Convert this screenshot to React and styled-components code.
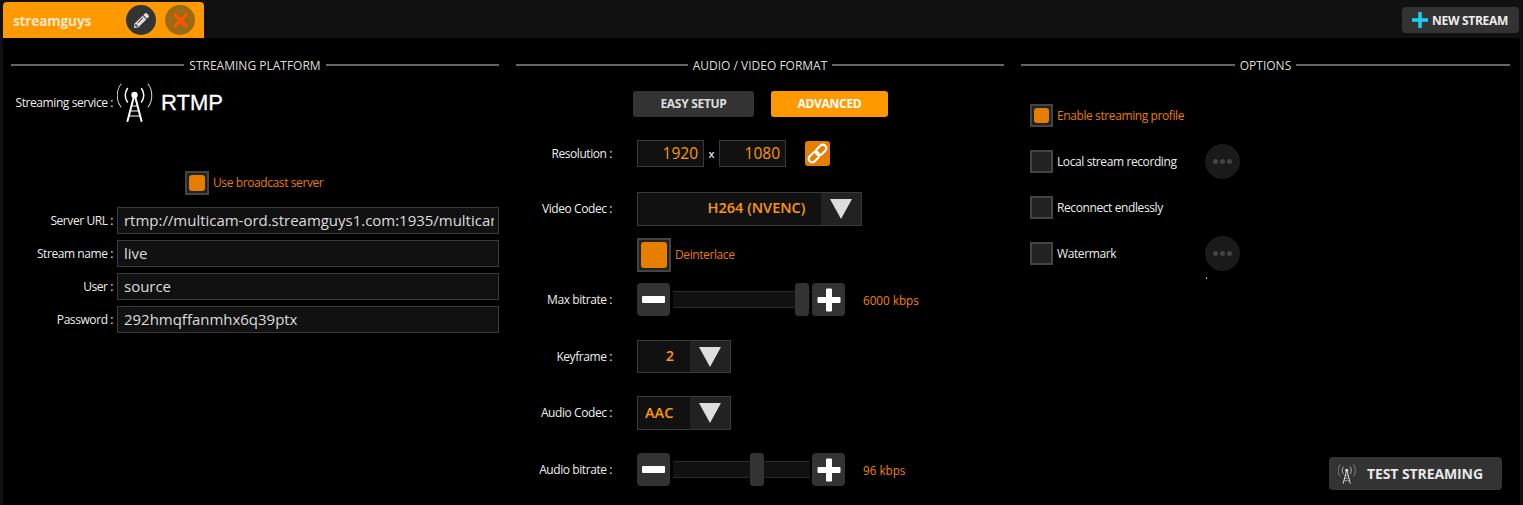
import React from "react";
import styled, { createGlobalStyle } from "styled-components";
import { FaPencilAlt } from "react-icons/fa";

const Global = createGlobalStyle`
  html, body { margin: 0; padding: 0; height: 100%; background: #111; overflow: hidden; }
  * { box-sizing: border-box; }
  body { font-family: "Open Sans", "Noto Sans", sans-serif; }
`;

const ORANGE = "#ff9900";
const DARK_ORANGE = "#e67e00";

const Page = styled.div`
  width: 1523px; height: 505px; background: #111; padding: 0 3px;
  display: flex; flex-direction: column;
`;
const TopBar = styled.header`
  height: 38px; flex: none; display: flex; justify-content: space-between; align-items: flex-start; padding-top: 2px;
`;
const Tab = styled.div`
  width: 201px; height: 36px; background: ${ORANGE}; border-radius: 4px 4px 0 0;
  display: flex; align-items: center; padding: 0 9px 0 10px; gap: 9px;
`;
const TabName = styled.span`
  flex: 1; font-family: "Open Sans", sans-serif; font-weight: 700; font-size: 13.7px; letter-spacing: -0.2px; color: #f7e7c8;
`;
const RoundBtn = styled.button`
  width: 30px; height: 30px; border: 0; border-radius: 50%; padding: 0; flex: none;
  background: ${p => p.$bg}; color: ${p => p.$fg}; display: flex; align-items: center; justify-content: center;
`;
const NewStream = styled.button`
  margin: 5px 1px 0 0; width: 117px; height: 26px; border: 0; border-radius: 4px; background: #333;
  display: flex; align-items: center; gap: 4px; padding: 0 0 0 10px;
  color: #eee; font-family: "Open Sans", sans-serif; font-weight: 700; font-size: 12px; letter-spacing: -0.3px; white-space: nowrap;
`;
const Main = styled.main`
  flex: 1; background: #000; display: grid; grid-template-columns: 488px 488px 489px; gap: 17px; padding: 18px 10px 15px 8px;
`;
const Col = styled.section`
  display: flex; flex-direction: column; min-width: 0;
`;
const Heading = styled.h2`
  margin: 0; height: 18px; display: flex; align-items: center; gap: 5px; flex: none;
  font-weight: 400; font-size: 12px; letter-spacing: 0; color: #ddd; white-space: nowrap;
  &::before, &::after { content: ""; flex: 1; height: 2px; background: #666; }
`;
const Row = styled.div`
  display: flex; align-items: center; flex: none; margin-top: ${p => p.$mt || 0}px; height: ${p => p.$h}px;
  padding-left: ${p => p.$pl || 0}px;
`;
const Label = styled.label`
  flex: none; width: ${p => p.$w}px; margin-right: ${p => p.$gap}px; padding-bottom: 1px; text-align: right;
  font-size: 12px; letter-spacing: -0.42px; color: #eee; white-space: nowrap;
`;
const ServiceName = styled.span`
  font-family: "Liberation Sans", sans-serif; font-size: 22px; color: #fff; margin-left: 8px;
  -webkit-text-stroke: 0.3px #fff;
`;
const Tower = styled.svg`
  flex: none; display: block;
`;
const Check = styled.span`
  flex: none; width: ${p => p.$size}px; height: ${p => p.$size}px; background: #222; border: 2px solid #444;
  padding: 2px; display: block;
  &::after { content: ""; display: ${p => p.$on ? "block" : "none"}; width: 100%; height: 100%; background: ${DARK_ORANGE}; border-radius: 3px; }
`;
const CheckText = styled.span`
  margin-left: 4px; padding-bottom: 1px; font-size: 12px; letter-spacing: -0.4px; white-space: nowrap;
  color: ${p => p.$on ? DARK_ORANGE : "#eee"};
`;
const TextInput = styled.input`
  width: 382px; height: 27px; background: #111; border: 1px solid #3a3a3a; border-radius: 0; outline: 0;
  color: #ddd; font-family: "Open Sans", sans-serif; font-size: 15px; padding: 0 4px 2px 6px; letter-spacing: -0.02px;
`;
const Toggle = styled.button`
  width: ${p => p.$w}px; height: 26px; border: 0; border-radius: 3px; padding: 0 0 1px;
  margin-left: ${p => p.$ml}px; background: ${p => p.$on ? ORANGE : "#333"}; color: ${p => p.$on ? "#fff" : "#ddd"};
  font-family: "Open Sans", sans-serif; font-weight: 700; font-size: 12px; letter-spacing: -0.3px;
`;
const NumBox = styled.div`
  width: 67px; height: 27px; background: #111; border: 1px solid #3a3a3a; color: ${ORANGE};
  font-size: 15.5px; text-align: right; padding-right: 5px; line-height: 25px;
`;
const Times = styled.span`
  width: 15px; text-align: center; color: #ddd; font-size: 11px; font-weight: 600;
`;
const LinkBtn = styled.button`
  margin-left: 19px; width: 25px; height: 25px; padding: 0; border: 0; border-radius: 3px; background: ${DARK_ORANGE};
  display: flex; align-items: center; justify-content: center;
`;
const Select = styled.div`
  width: ${p => p.$w}px; height: ${p => p.$h}px; display: flex; background: #111; border: 1px solid #3a3a3a;
`;
const SelectValue = styled.div`
  flex: 1; color: ${ORANGE}; font-weight: 600; font-size: 14.5px; line-height: ${p => p.$h - 4}px;
  text-align: ${p => p.$align}; padding: ${p => p.$pad};
`;
const SelectArrow = styled.div`
  flex: none; width: 40px; background: #222; display: flex; align-items: center; justify-content: center;
`;
const Step = styled.button`
  flex: none; width: 33px; height: 33px; padding: 0; border: 0; border-radius: 4px; background: #333;
  display: flex; align-items: center; justify-content: center;
`;
const Track = styled.div`
  position: relative; flex: none; width: 137px; height: 17px; margin: 0 2px 0 3px; background: #111;
  border-top: 1px solid #2a2a2a; border-bottom: 1px solid #2a2a2a;
`;
const Handle = styled.span`
  position: absolute; top: -9px; width: 14px; height: 33px; background: #333; border-radius: 3px;
`;
const Value = styled.span`
  margin-left: 18px; color: #f08400; font-size: 11.7px; white-space: nowrap;
`;
const OptionText = styled(CheckText)`
  width: 148px;
`;
const Dots = styled.button`
  width: 35px; height: 35px; margin: -6px 0; border: 0; border-radius: 50%; background: #1a1a1a; padding: 0;
  display: flex; align-items: center; justify-content: center; gap: 2px;
  i { display: block; width: 5px; height: 5px; border-radius: 50%; background: #444; }
`;
const Speck = styled.span`
  display: block; width: 1px; height: 2px; background: #bbb; margin: 12px 0 0 185px; flex: none;
`;
const TestBtn = styled.button`
  margin-top: auto; align-self: flex-end; margin-right: 8px; width: 173px; height: 33px; border: 0; border-radius: 4px; background: #333;
  display: flex; align-items: center; padding: 0 0 0 9px; gap: 11px;
  color: #e8e8e8; font-family: "Open Sans", sans-serif; font-weight: 700; font-size: 14px; letter-spacing: -0.1px; white-space: nowrap;
`;

const TowerIcon = ({ w, h, color = "#fff" }) => (
  <Tower width={w} height={h} viewBox="0 0 36 39" fill="none" stroke={color} strokeLinecap="round">
    <circle cx="17.500" cy="12" r="3.200" fill={color} stroke="none" />
    <path d="M10.500 5.500c-3 4-3 9.500 0 13.500M24.500 5.500c3 4 3 9.500 0 13.500" strokeWidth="1.500" />
    <path d="M4 1C-1 7-1 18 4 24M31 1c5 6 5 17 0 23" strokeWidth="1.100" opacity=".8" />
    <path d="M16.500 15 10.500 38M18.500 15 24.500 38" strokeWidth="2" />
    <path d="M14.500 23h6M13.500 28h8M12.500 33h10" strokeWidth="1.200" />
  </Tower>
);

const Arrow = () => (
  <svg width="22" height="20" viewBox="0 0 22 20"><path d="M0 0h22L11 20z" fill="#ddd" /></svg>
);
const Minus = () => (
  <svg width="24" height="8" viewBox="0 0 24 8"><rect width="23" height="7" rx="1" fill="#fff" /></svg>
);
const Plus = () => (
  <svg width="24" height="24" viewBox="0 0 24 24"><path d="M9 1.500a1 1 0 0 1 1-1h4a1 1 0 0 1 1 1V9h7.500a1 1 0 0 1 1 1v4a1 1 0 0 1-1 1H15v7.500a1 1 0 0 1-1 1h-4a1 1 0 0 1-1-1V15H1.500a1 1 0 0 1-1-1v-4a1 1 0 0 1 1-1H9z" fill="#fff" /></svg>
);
const CrossIcon = () => (
  <svg width="15" height="15" viewBox="0 0 15 15"><path d="M2 2l11 11M13 2L2 13" stroke="#ff5500" strokeWidth="3.200" strokeLinecap="round" /></svg>
);
const CyanPlus = () => (
  <svg width="16" height="16" viewBox="0 0 16 16"><path d="M8 0v16M0 8h16" stroke="#19d3f3" strokeWidth="3.400" /></svg>
);
const ChainIcon = () => (
  <svg width="23" height="23" viewBox="0 0 23 23" fill="none" stroke="#fff" strokeWidth="2.200">
    <g transform="rotate(-45 11.500 11.500)">
      <rect x="0.500" y="8" width="12" height="7" rx="3.500" />
      <rect x="10.500" y="8" width="12" height="7" rx="3.500" />
    </g>
  </svg>
);

const fields = [
  ["Server URL :", "rtmp://multicam-ord.streamguys1.com:1935/multicam-ord"],
  ["Stream name :", "live"],
  ["User :", "source"],
  ["Password :", "292hmqffanmhx6q39ptx"],
];

const options = [
  { text: "Enable streaming profile", on: true, mt: 30 },
  { text: "Local stream recording", dots: true, mt: 23 },
  { text: "Reconnect endlessly", mt: 23 },
  { text: "Watermark", dots: true, mt: 23 },
];

export default function App() {
  return (
    <Page>
      <Global />
      <TopBar>
        <Tab>
          <TabName>streamguys</TabName>
          <RoundBtn $bg="#333" $fg="#ddd"><FaPencilAlt size={15} /></RoundBtn>
          <RoundBtn $bg="#9a6a14"><CrossIcon /></RoundBtn>
        </Tab>
        <NewStream><CyanPlus />NEW STREAM</NewStream>
      </TopBar>
      <Main>
        <Col>
          <Heading>STREAMING PLATFORM</Heading>
          <Row $mt={9} $h={39}>
            <Label $w={102} $gap={4}>Streaming service :</Label>
            <TowerIcon w={36} h={39} />
            <ServiceName>RTMP</ServiceName>
          </Row>
          <Row $mt={49} $h={24} $pl={174}>
            <Check $size={24} $on />
            <CheckText $on>Use broadcast server</CheckText>
          </Row>
          {fields.map(([l, v], i) => (
            <Row key={l} $mt={i === 0 ? 12 : 6} $h={27}>
              <Label $w={102} $gap={4}>{l}</Label>
              <TextInput readOnly value={v} />
            </Row>
          ))}
        </Col>
        <Col>
          <Heading>AUDIO / VIDEO FORMAT</Heading>
          <Row $mt={17} $h={26} $pl={117}>
            <Toggle $w={121} $ml={0}>EASY SETUP</Toggle>
            <Toggle $w={117} $ml={17} $on>ADVANCED</Toggle>
          </Row>
          <Row $mt={23} $h={27}>
            <Label $w={96} $gap={25}>Resolution :</Label>
            <NumBox>1920</NumBox>
            <Times>x</Times>
            <NumBox>1080</NumBox>
            <LinkBtn><ChainIcon /></LinkBtn>
          </Row>
          <Row $mt={25} $h={34}>
            <Label $w={96} $gap={25}>Video Codec :</Label>
            <Select $w={225} $h={34}>
              <SelectValue $h={34} $align="center" $pad="0 0 0 54px">H264 (NVENC)</SelectValue>
              <SelectArrow><Arrow /></SelectArrow>
            </Select>
          </Row>
          <Row $mt={12} $h={34} $pl={121}>
            <Check $size={34} $on />
            <CheckText $on>Deinterlace</CheckText>
          </Row>
          <Row $mt={11} $h={33}>
            <Label $w={96} $gap={25}>Max bitrate :</Label>
            <Step><Minus /></Step>
            <Track><Handle style={{ left: "122px" }} /></Track>
            <Step><Plus /></Step>
            <Value>6000 kbps</Value>
          </Row>
          <Row $mt={24} $h={33}>
            <Label $w={96} $gap={25}>Keyframe :</Label>
            <Select $w={94} $h={33}>
              <SelectValue $h={33} $align="right" $pad="0 16px 0 0">2</SelectValue>
              <SelectArrow><Arrow /></SelectArrow>
            </Select>
          </Row>
          <Row $mt={23} $h={34}>
            <Label $w={96} $gap={25}>Audio Codec :</Label>
            <Select $w={94} $h={34}>
              <SelectValue $h={36} $align="left" $pad="0 0 0 7px">AAC</SelectValue>
              <SelectArrow><Arrow /></SelectArrow>
            </Select>
          </Row>
          <Row $mt={23} $h={33}>
            <Label $w={96} $gap={25}>Audio bitrate :</Label>
            <Step><Minus /></Step>
            <Track><Handle style={{ left: "77px" }} /></Track>
            <Step><Plus /></Step>
            <Value>96 kbps</Value>
          </Row>
        </Col>
        <Col>
          <Heading>OPTIONS</Heading>
          {options.map(o => (
            <Row key={o.text} $mt={o.mt} $h={23} $pl={9}>
              <Check $size={23} $on={o.on} />
              <OptionText $on={o.on}>{o.text}</OptionText>
              {o.dots && <Dots><i /><i /><i /></Dots>}
            </Row>
          ))}
          <Speck />
          <TestBtn><TowerIcon w={18} h={20} color="#ddd" />TEST STREAMING</TestBtn>
        </Col>
      </Main>
    </Page>
  );
}
